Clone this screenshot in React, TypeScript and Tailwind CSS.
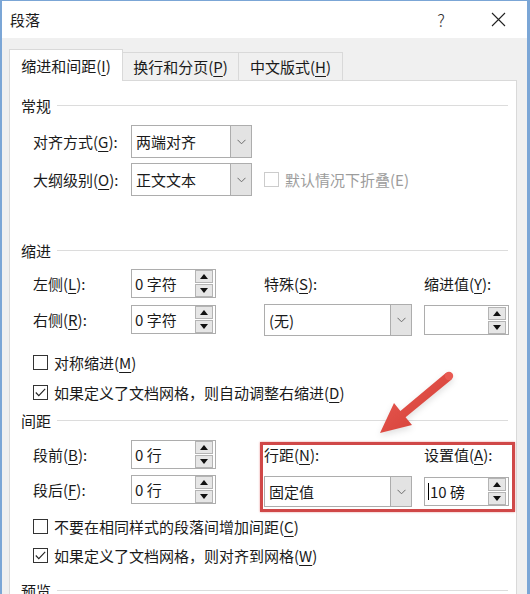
import React from "react";

// 下划线助记符
function U({ c }: { c: string }) {
  return <span className="underline underline-offset-[3px] decoration-1">{c}</span>;
}

function Chevron() {
  return (
    <svg width="9" height="6" viewBox="0 0 9 6">
      <polyline points="0.5,0.8 4.5,4.8 8.5,0.8" fill="none" stroke="#6b6b6b" strokeWidth="1" />
    </svg>
  );
}

function Select({ value, w, h }: { value: React.ReactNode; w: string; h: string }) {
  return (
    <div className={`flex border border-[#adadad] bg-white ${w} ${h}`}>
      <div className="flex flex-1 items-center pl-[4px]">{value}</div>
      <div className="flex w-[21px] items-center justify-center border-l border-[#adadad] bg-[#e3e3e3]">
        <Chevron />
      </div>
    </div>
  );
}

function SpinBtn({ up }: { up?: boolean }) {
  return (
    <div className="flex h-[13px] w-[18px] items-center justify-center border border-[#b4b4b4] bg-[#e6e6e6]">
      <svg width="8" height="5" viewBox="0 0 8 5">
        {up ? <polygon points="0,5 8,5 4,0" fill="#111" /> : <polygon points="0,0 8,0 4,5" fill="#111" />}
      </svg>
    </div>
  );
}

function Spin({ value, h, caret }: { value?: string; h: string; caret?: boolean }) {
  return (
    <div className={`flex w-[85px] border border-[#adadad] bg-white ${h}`}>
      <div className="flex flex-1 items-center pl-[3px]">
        {caret && <span className="mr-[1px] inline-block h-[17px] w-px bg-black" />}
        {value}
      </div>
      <div className="flex flex-col justify-center gap-px pr-[2px]">
        <SpinBtn up />
        <SpinBtn />
      </div>
    </div>
  );
}

function Check({ checked, disabled }: { checked?: boolean; disabled?: boolean }) {
  return (
    <div
      className={`flex h-[15px] w-[15px] items-center justify-center border bg-white ${
        disabled ? "border-[#cccccc]" : "border-[#333333]"
      }`}
    >
      {checked && (
        <svg width="11" height="9" viewBox="0 0 11 9">
          <polyline points="0.8,4.5 3.8,7.6 10.2,0.8" fill="none" stroke="#222" strokeWidth="1.1" />
        </svg>
      )}
    </div>
  );
}

function Section({ title }: { title: string }) {
  return (
    <div className="flex h-[20px] items-center pl-[11px] pr-[8px]">
      <span>{title}</span>
      <div className="ml-[6px] h-px flex-1 bg-[#dcdcdc]" />
    </div>
  );
}

function CheckRow({ checked, children, mt }: { checked?: boolean; children: React.ReactNode; mt: string }) {
  return (
    <div className={`flex h-[20px] items-center pl-[23px] ${mt}`}>
      <Check checked={checked} />
      <span className="ml-[6px]">{children}</span>
    </div>
  );
}

function Arrow() {
  return (
    <svg className="pointer-events-none absolute left-0 top-0 drop-shadow-md" width="530" height="594">
      <defs>
        <linearGradient id="ar" x1="0" y1="0" x2="1" y2="1">
          <stop offset="0" stopColor="#ea5d55" />
          <stop offset="1" stopColor="#d13b33" />
        </linearGradient>
      </defs>
      <polygon
        points="449.6,378.4 444.4,371.6 398.4,409.9 392,402 378,432 410,424 403.6,416.2"
        fill="url(#ar)"
        strokeLinejoin="round"
      />
      <circle cx="447" cy="375" r="4.2" fill="#e85a52" />
    </svg>
  );
}

export default function App() {
  return (
    <div className="relative h-[594px] w-[530px] overflow-hidden border-l-2 border-r-[3px] border-t border-[#7ba6d6] bg-[#f0f0f0] font-['Noto_Sans_CJK_SC',sans-serif] text-[15px] leading-none text-[#1a1a1a]">
      {/* 标题栏 */}
      <div className="flex h-[37px] items-center bg-white">
        <span className="pl-[8px]">段落</span>
        <div className="ml-auto flex items-center">
          <div className="flex w-[46px] justify-center text-[17px] font-light text-[#333]">?</div>
          <div className="w-[11px]" />
          <div className="flex w-[46px] justify-center">
            <svg width="15" height="15" viewBox="0 0 15 15">
              <path d="M1 1 L14 14 M14 1 L1 14" stroke="#222" strokeWidth="1.1" />
            </svg>
          </div>
          <div className="w-[6px]" />
        </div>
      </div>

      {/* 选项卡 */}
      <div className="flex h-[43px] items-end pl-[7px]">
        <div className="relative z-10 flex h-[32px] w-[114px] items-center justify-center border-l border-r border-t border-[#d9d9d9] bg-white">
          缩进和间距(<U c="I" />)
        </div>
        <div className="mb-px flex h-[28px] w-[116px] items-center justify-center border-r border-t border-[#d9d9d9] bg-[#f0f0f0]">
          换行和分页(<U c="P" />)
        </div>
        <div className="mb-px flex h-[28px] w-[104px] items-center justify-center border-r border-t border-[#d9d9d9] bg-[#f0f0f0]">
          中文版式(<U c="H" />)
        </div>
      </div>

      {/* 内容面板 */}
      <div className="-mt-px ml-[7px] h-[560px] w-[508px] border border-[#d9d9d9] bg-white">
        <div className="mt-[14px]">
          <Section title="常规" />
        </div>

        <div className="mt-[10px] flex h-[33px] items-center pl-[23px]">
          <span className="w-[98px]">
            对齐方式(<U c="G" />):
          </span>
          <Select value="两端对齐" w="w-[121px]" h="h-[33px]" />
        </div>
        <div className="mt-[5px] flex h-[33px] items-center pl-[23px]">
          <span className="w-[98px]">
            大纲级别(<U c="O" />):
          </span>
          <Select value="正文文本" w="w-[121px]" h="h-[33px]" />
          <div className="ml-[12px]">
            <Check disabled />
          </div>
          <span className="ml-[6px] text-[#9c9c9c]">默认情况下折叠(E)</span>
        </div>

        <div className="mt-[44px]">
          <Section title="缩进" />
        </div>

        <div className="mt-[9px] flex pl-[23px]">
          <div className="flex flex-col">
            <div className="flex h-[29px] items-center">
              <span className="w-[98px]">
                左侧(<U c="L" />):
              </span>
              <Spin value="0 字符" h="h-[29px]" />
            </div>
            <div className="mt-[7px] flex h-[29px] items-center">
              <span className="w-[98px]">
                右侧(<U c="R" />):
              </span>
              <Spin value="0 字符" h="h-[29px]" />
            </div>
          </div>
          <div className="ml-[48px] flex w-[148px] flex-col">
            <div className="flex h-[29px] items-center">
              特殊(<U c="S" />):
            </div>
            <div className="mt-[6px]">
              <Select value="(无)" w="w-[148px]" h="h-[32px]" />
            </div>
          </div>
          <div className="ml-[12px] flex flex-col">
            <div className="flex h-[29px] items-center">
              缩进值(<U c="Y" />):
            </div>
            <div className="mt-[7px]">
              <Spin h="h-[30px]" />
            </div>
          </div>
        </div>

        <CheckRow mt="mt-[16px]">
          对称缩进(<U c="M" />)
        </CheckRow>
        <CheckRow mt="mt-[10px]" checked>
          如果定义了文档网格，则自动调整右缩进(<U c="D" />)
        </CheckRow>

        <div className="mt-[8px]">
          <Section title="间距" />
        </div>

        <div className="mt-[10px] flex pl-[23px]">
          <div className="flex flex-col">
            <div className="flex h-[29px] items-center">
              <span className="w-[98px]">
                段前(<U c="B" />):
              </span>
              <Spin value="0 行" h="h-[29px]" />
            </div>
            <div className="mt-[6px] flex h-[29px] items-center">
              <span className="w-[98px]">
                段后(<U c="F" />):
              </span>
              <Spin value="0 行" h="h-[29px]" />
            </div>
          </div>
          <div className="ml-[48px] flex w-[148px] flex-col">
            <div className="flex h-[29px] items-center">
              行距(<U c="N" />):
            </div>
            <div className="mt-[7px]">
              <Select value="固定值" w="w-[148px]" h="h-[31px]" />
            </div>
          </div>
          <div className="ml-[12px] flex flex-col">
            <div className="flex h-[29px] items-center">
              设置值(<U c="A" />):
            </div>
            <div className="mt-[8px]">
              <Spin value="10 磅" caret h="h-[29px]" />
            </div>
          </div>
        </div>

        <CheckRow mt="mt-[9px]">
          不要在相同样式的段落间增加间距(<U c="C" />)
        </CheckRow>
        <CheckRow mt="mt-[9px]" checked>
          如果定义了文档网格，则对齐到网格(<U c="W" />)
        </CheckRow>

        <div className="mt-[15px]">
          <Section title="预览" />
        </div>
      </div>

      {/* 标注：红框与箭头 */}
      <div className="pointer-events-none absolute left-[258px] top-[441px] h-[70px] w-[255px] border-[3px] border-[#d04848] shadow-[0_0_2px_#e89a9a]" />
      <Arrow />
    </div>
  );
}
